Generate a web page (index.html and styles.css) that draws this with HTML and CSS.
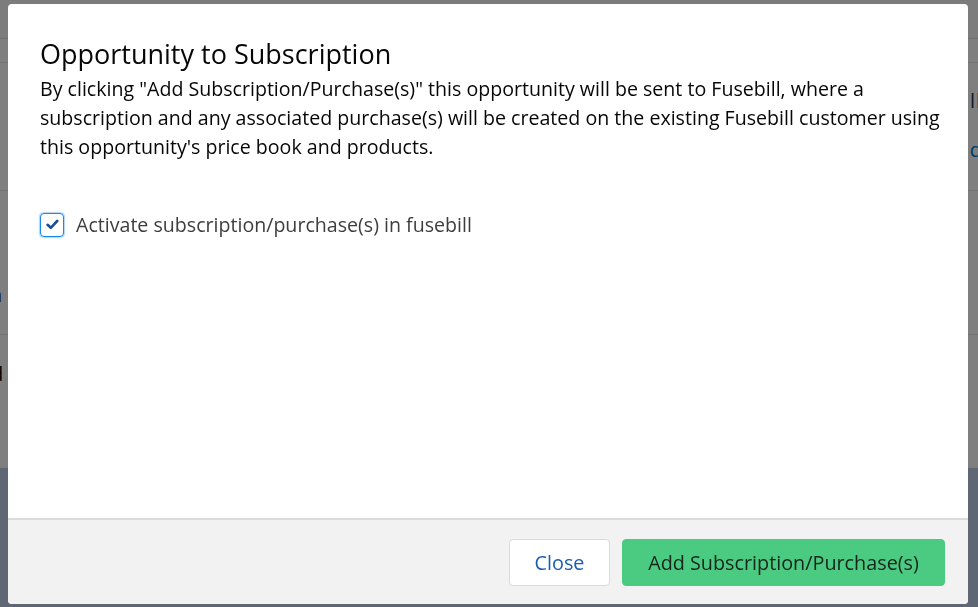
FILE: index.html
```html
<!DOCTYPE html>
<html lang="en">
<head>
  <meta charset="UTF-8">
  <title>Opportunity to Subscription</title>
  <link rel="stylesheet" href="styles.css">
</head>
<body>

<!-- page behind the modal -->
<div class="page">
  <div class="page-top"></div>
  <div class="page-row page-row-a"><span class="page-text right dark">ll</span></div>
  <div class="page-row page-row-b"><span class="page-text right blue">d</span></div>
  <div class="page-row page-row-c"><span class="page-text left">a</span></div>
  <div class="page-row page-row-d"><span class="page-text left">d</span></div>
  <div class="page-foot"></div>
</div>

<div class="backdrop"></div>

<!-- MODAL -->
<div class="modal">
  <div class="modal-body">
    <h2 class="modal-title">Opportunity to Subscription</h2>
    <p class="modal-text">By clicking "Add Subscription/Purchase(s)" this opportunity will be sent to Fusebill, where a subscription and any associated purchase(s) will be created on the existing Fusebill customer using this opportunity's price book and products.</p>

    <label class="check-row">
      <span class="check-box">
        <svg width="13" height="11" viewBox="0 0 13 11"><path d="M1.6 5.8 L4.8 8.8 L11.2 2" fill="none" stroke="#1b4f8f" stroke-width="2.6" stroke-linecap="round" stroke-linejoin="round"/></svg>
      </span>
      <span class="check-label">Activate subscription/purchase(s) in fusebill</span>
    </label>
  </div>

  <div class="modal-footer">
    <button class="btn btn-neutral">Close</button>
    <button class="btn btn-brand">Add Subscription/Purchase(s)</button>
  </div>
</div>

</body>
</html>
```

FILE: styles.css
```css
body { margin: 0; padding: 0; font-family: "Open Sans", "Liberation Sans", sans-serif; background: #fff; height: 607px; overflow: hidden; }

.page { display: flex; flex-direction: column; height: 607px; background: #fff; }
.page-top { height: 38px; background: #f8f8f8; border-bottom: 1px solid #e0e0e0; }
.page-row { position: relative; border-bottom: 1px solid #e5e5e5; }
.page-row-a { height: 23px; }
.page-row-b { height: 127px; }
.page-row-c { height: 143px; }
.page-row-d { height: 133px; border-bottom: none; }
.page-foot { flex: 1; background: #bfcfea; }
.page-text { position: absolute; font-size: 20px; line-height: 24px; color: #080707; }
.page-text.right { right: -4px; }
.page-text.left { left: -9px; }
.page-row-a .page-text { top: 50px; }
.page-row-b .page-text { top: 75px; }
.page-row-c .page-text { top: 92px; }
.page-row-d .page-text { top: 27px; }
.page-text.dark { color: #16325c; letter-spacing: 1px; }
.page-text.blue { color: #0070d2; }

.backdrop { position: fixed; top: 0; left: 0; width: 100%; height: 100%; background: rgba(0,0,0,0.5); }

.modal { position: fixed; top: 4px; left: 8px; width: 960px; height: 600px; background: #fff; border-radius: 4px; display: flex; flex-direction: column; overflow: hidden; }
.modal-body { flex: 1; padding: 34px 18px 0 32px; }
.modal-title { margin: 0 0 4px; font-size: 27px; font-weight: normal; line-height: 32px; color: #080707; }
.modal-text { margin: 0; font-size: 19.6px; line-height: 29px; color: #080707; }

.check-row { display: flex; align-items: center; gap: 12px; margin-top: 49px; }
.check-box { width: 22px; height: 22px; border: 1px solid #1589ee; border-radius: 4px; display: flex; align-items: center; justify-content: center; box-shadow: 0 0 2px #0070d2; }
.check-label { font-size: 19.6px; line-height: 29px; color: #3e3e3c; }

.modal-footer { height: 84px; border-top: 2px solid #dddbda; background: #f3f2f2; display: flex; justify-content: flex-end; align-items: center; gap: 12px; padding-right: 23px; }
.btn { height: 47px; font-family: inherit; font-size: 19.8px; border-radius: 4px; cursor: pointer; padding: 0 20px; }
.btn-neutral { width: 101px; background: #fff; border: 1px solid #dddbda; color: #1b5eb0; }
.btn-brand { width: 323px; background: #4bca81; border: 1px solid #4bca81; color: #16261c; }
```
